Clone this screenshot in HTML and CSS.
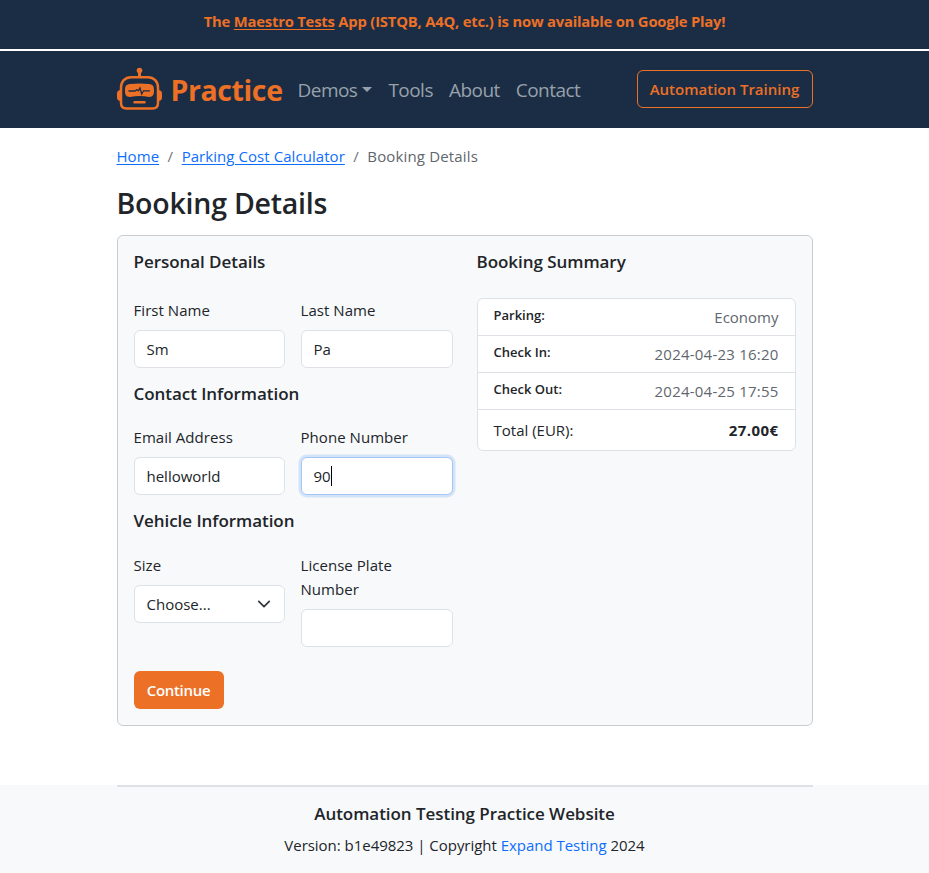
FILE: index.html
```html
<!DOCTYPE html>
<html lang="en">
<head>
<meta charset="utf-8">
<title>Booking Details</title>
<link rel="stylesheet" href="styles.css">
</head>
<body>
<div class="promo"><span>The <a href="#">Maestro Tests</a> App (ISTQB, A4Q, etc.) is now available on Google Play!</span></div>
<header class="navbar">
  <div class="container nav-inner">
    <a class="brand" href="#">
      <svg class="logo" width="45" height="44" viewBox="0 0 45 44" fill="none" stroke="#ec7026">
        <circle cx="22.500" cy="3.500" r="2.800" fill="#ec7026" stroke="none"/>
        <path d="M22.500 5v5" stroke-width="3"/>
        <path d="M14 10.200h17c6 0 10 4.500 10 10.500v15.300q0 5.500-5.500 5.500h-26q-5.500 0-5.500-5.500v-15.300c0-6 4-10.500 10-10.500z" stroke-width="2.500"/>
        <path d="M4 23q-4 0-4 3.500v4q0 3.500 4 3.500zM41 23q4 0 4 3.500v4q0 3.500-4 3.500z" fill="#ec7026" stroke="none"/>
        <path d="M13 17q9.500-.8 19 0c4.500.4 5 3 5 6.500s-.5 6.300-5 6.500q-9.500-1.800-19 0c-4.500-.2-5-3-5-6.500s.5-6.100 5-6.500z" fill="#ec7026" stroke="none"/>
        <path d="M11.500 24h6.500l1.800-1.200 1.700.8 1.500-2.600 1.700 6 1.800-3.200h6.500" stroke="#1a2d44" stroke-width="1.300"/>
        <path d="M17.500 35.200h10" stroke-width="2.400" stroke-linecap="round"/>
      </svg>
      <span>Practice</span>
    </a>
    <nav class="links">
      <a href="#">Demos<i class="caret"></i></a>
      <a href="#">Tools</a>
      <a href="#">About</a>
      <a href="#">Contact</a>
    </nav>
    <a class="training" href="#">Automation Training</a>
  </div>
</header>
<main class="container">
  <div class="crumbs"><a href="#">Home</a><span class="slash">/</span><a href="#">Parking Cost Calculator</a><span class="slash">/</span><span class="current">Booking Details</span></div>
  <h1>Booking Details</h1>
  <section class="card">
    <form class="details">
      <h2>Personal Details</h2>
      <div class="fields personal">
        <div><label>First Name</label><div class="input">Sm</div></div>
        <div><label>Last Name</label><div class="input">Pa</div></div>
      </div>
      <h2>Contact Information</h2>
      <div class="fields">
        <div><label>Email Address</label><div class="input">helloworld</div></div>
        <div><label>Phone Number</label><div class="input focused">90<i class="cursor"></i></div></div>
      </div>
      <h2>Vehicle Information</h2>
      <div class="fields vehicle">
        <div><label>Size</label><div class="input select"><span>Choose...</span>
          <svg width="14" height="14" viewBox="0 0 16 16" fill="none" stroke="#343a40" stroke-width="2" stroke-linecap="round" stroke-linejoin="round"><path d="m2 5 6 6 6-6"/></svg></div></div>
        <div><label>License Plate<br>Number</label><div class="input"></div></div>
      </div>
      <a class="continue" href="#">Continue</a>
    </form>
    <div class="summary">
      <h2>Booking Summary</h2>
      <ul>
        <li><h3>Parking:</h3><span>Economy</span></li>
        <li><h3>Check In:</h3><span class="date">2024-04-23 16:20</span></li>
        <li><h3>Check Out:</h3><span class="date">2024-04-25 17:55</span></li>
        <li class="total"><span>Total (EUR):</span><strong>27.00€</strong></li>
      </ul>
    </div>
  </section>
</main>
<footer>
  <div class="container">
    <h2>Automation Testing Practice Website</h2>
    <p>Version: b1e49823 | Copyright <a href="#">Expand Testing</a> 2024</p>
  </div>
</footer>
</body>
</html>
```

FILE: styles.css
```css
* { box-sizing: border-box; }
body {
  margin: 0;
  height: 873px;
  display: flex;
  flex-direction: column;
  font: 400 15px/24px "Open Sans", "Noto Sans", sans-serif;
  letter-spacing: 0;
  color: #212529;
  background: #fff;
}
h1, h2, h3, p, ul { margin: 0; padding: 0; }
.container { width: 696px; margin: 0 auto; }
.promo {
  height: 51px;
  padding-top: 9px;
  border-bottom: 2px solid #fff;
  background: #1a2d44;
  color: #ec7026;
  font-size: 14.8px;
  font-weight: 700;
  letter-spacing: -0.2px;
  text-align: center;
}
.promo a { color: inherit; text-underline-offset: 2px; }
.navbar { height: 77px; background: #1a2d44; }
.nav-inner { height: 77px; display: flex; align-items: center; }
.nav-inner a { text-decoration: none; }
.brand { display: flex; align-items: center; gap: 9px; width: 181px; color: #ec7026; font-size: 28.5px; font-weight: 700; letter-spacing: -0.4px; }
.logo { flex: none; margin-bottom: 2px; }
.links { display: flex; gap: 16px; font-size: 19px; letter-spacing: -0.53px; }
.links a { color: #98a1ab; white-space: nowrap; }
.caret { display: inline-block; margin-left: 5px; vertical-align: 5px; border: 5px solid transparent; border-top-color: #98a1ab; border-bottom: 0; }
.training { margin: 0 0 2px auto; width: 176px; height: 38px; border: 1px solid #ec7026; border-radius: 6px; color: #ec7026; font-weight: 600; line-height: 36px; text-align: center; white-space: nowrap; }
main { height: 657px; padding-top: 16px; }
.crumbs { display: flex; letter-spacing: 0.06px; }
.crumbs a { color: #0d6efd; text-underline-offset: 2px; }
.crumbs .slash { width: 22.5px; text-align: center; color: #6c757d; }
.current { color: #5f666d; letter-spacing: 0.15px; }
h1 { margin: 17px 0 14px; font-size: 28.5px; font-weight: 600; line-height: 36px; letter-spacing: -0.22px; }
h2 { font-size: 17px; font-weight: 600; line-height: 20px; padding-bottom: 1px; letter-spacing: -0.05px; }
.card { height: 491px; padding: 16px; border: 1px solid #cacccf; border-radius: 6px; background: #f8f9fb; display: grid; grid-template-columns: 319px 319px; gap: 24px; }
.fields { display: grid; grid-template-columns: 151px 152px; gap: 16px; margin: 20px 0 16px; }
.fields.personal { margin-top: 25px; }
.fields.vehicle { margin: 21px 0 24px; }
label { display: block; margin-bottom: 8px; letter-spacing: 0.05px; }
.input { display: flex; align-items: center; height: 38px; padding: 0 12px; border: 1px solid #dee2e6; border-radius: 6px; background: #fff; }
.focused { border-color: #a5c7f4; box-shadow: 0 0 0 2.5px #d3e3f8; }
.cursor { width: 1px; height: 20px; background: #000; }
.select { justify-content: space-between; }
.select svg { margin-right: 1px; }
.continue { display: block; width: 90px; height: 38px; border-radius: 6px; background: #ec7026; color: #fff; font-weight: 600; letter-spacing: -0.3px; line-height: 38px; text-align: center; text-decoration: none; }
.summary ul { margin-top: 25px; border: 1px solid #dee2e6; border-radius: 6px; background: #fff; list-style: none; }
.summary li { display: flex; justify-content: space-between; height: 37px; padding: 0 16px; border-bottom: 1px solid #dee2e6; line-height: 37px; color: #5f666d; }
.summary .date { letter-spacing: 0.22px; }
.summary h3 { font-size: 13px; font-weight: 600; line-height: 33px; color: #212529; letter-spacing: 0; }
.summary .total { height: 40px; border: 0; line-height: 41px; color: #212529; }
.summary strong { letter-spacing: 0.45px; }
footer { flex: 1; background: #f8f9fb; text-align: center; }
footer .container { padding-top: 17px; border-top: 2px solid #dee2e6; }
footer p { margin-top: 8px; letter-spacing: -0.03px; }
footer a { color: #0d6efd; text-decoration: none; }
```
